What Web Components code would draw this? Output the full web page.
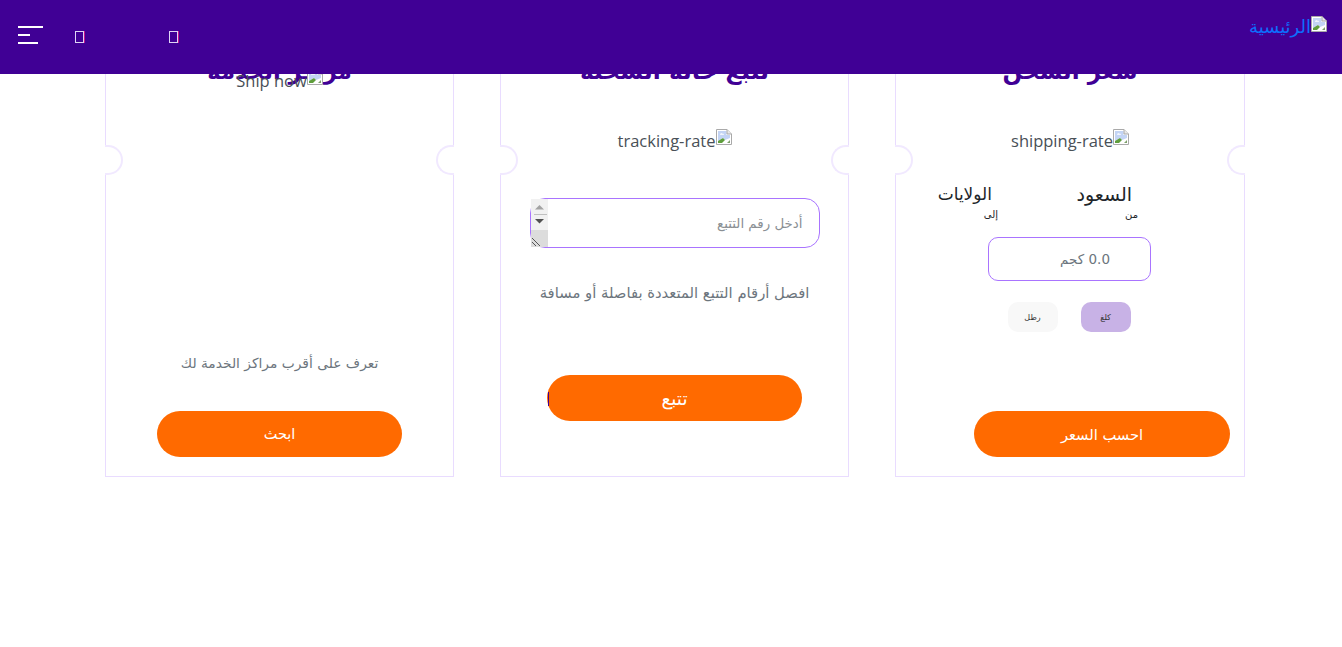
<!DOCTYPE html>
<html lang="ar" dir="rtl">
<head>
<meta charset="utf-8">
<title>الرئيسية</title>
<style>
  html, body { margin: 0; padding: 0; background: #fff; }
  body { font-family: "Noto Sans", "DejaVu Sans", sans-serif; color: #212529; min-height: 647px; }
  main { display: grid; grid-template-columns: 350px 349px 349px; column-gap: 46px; justify-content: start; padding: 20px 97px 0 0; height: 457px; }

  /* spacing of the card contents */
  .rate broken-pic, .track broken-pic { margin-top: 38px; }
  .rate route-row { margin-top: 29px; }
  .rate weight-input { margin: 13px 93px 0 auto; }
  .rate unit-toggle { margin-top: 21px; padding-right: 2px; }
  .rate pill-button { width: 256px; margin: auto 14px 0 0; align-self: flex-start; font-size: 14.7px; }
  .track code-box { margin-top: 45px; }
  .track hint-text { margin-top: 33px; font-size: 14.8px; }
  .track pill-button { width: 255px; margin: auto 0 36px 0; font-size: 18.5px; }
  .centers broken-pic { margin-top: -22px; }
  .centers hint-text { margin-top: auto; font-size: 13.8px; }
  .centers pill-button { width: 245px; margin: 36px 0 0 0; font-size: 14.5px; }
  .rate { --title-size: 23px; }
  .track { --title-size: 23.3px; }
  .centers { --title-size: 22.7px; }
</style>
</head>
<body>
<top-bar></top-bar>
<main>
  <rate-card class="rate" heading="سعر الشحن">
    <broken-pic>shipping-rate</broken-pic>
    <route-row from="السعود" to="الولايات"></route-row>
    <weight-input></weight-input>
    <unit-toggle></unit-toggle>
    <pill-button>احسب السعر</pill-button>
  </rate-card>
  <rate-card class="track" heading="تتبع حالة الشحنة">
    <broken-pic>tracking-rate</broken-pic>
    <code-box></code-box>
    <hint-text>افصل أرقام التتبع المتعددة بفاصلة أو مسافة</hint-text>
    <pill-button sliver>تتبع</pill-button>
  </rate-card>
  <rate-card class="centers" heading="مراكز الخدمة">
    <broken-pic>Ship now</broken-pic>
    <hint-text>تعرف على أقرب مراكز الخدمة لك</hint-text>
    <pill-button>ابحث</pill-button>
  </rate-card>
</main>

<script>
const AR_FONT = '"DejaVu Sans ExtraLight", "DejaVu Sans", sans-serif';
const BROKEN_ICON = `
  <svg width="16" height="16" viewBox="0 0 16 16" aria-hidden="true">
    <path d="M.5.5H11L15.5 5v10.5H.5z" fill="#fff" stroke="#a9a9a9"/>
    <path d="M2 2h8.5v4H14v3L9 11 7 9 2 12z" fill="#c3d4f5"/>
    <path d="M4 5.5c.5-1.5 2-1.5 2.5-.7.8-.3 1.6.2 1.5.9H4z" fill="#fff"/>
    <path d="M2 14v-2l5-3 2 2-3 3z" fill="#5f9e3c"/>
    <path d="M11 14l3-3v3z" fill="#7d9f6a"/>
    <path d="M11 .5V5h4.5" fill="#e9e9e9" stroke="#a9a9a9"/>
  </svg>`;

// helper so every element below stays a few lines
function shadow(el, html) {
  el.attachShadow({ mode: "open" }).innerHTML = html;
}

customElements.define("broken-pic", class extends HTMLElement {
  constructor() {
    super();
    shadow(this, `
    <style>
      :host { display: flex; justify-content: center; align-items: flex-start; height: 24px; font: 16.5px/24px "Open Sans", sans-serif; color: #495057; }
      svg { flex: none; }
    </style>
    ${BROKEN_ICON}<slot></slot>`);
  }
});

customElements.define("top-bar", class extends HTMLElement {
  constructor() {
    super();
    shadow(this, `
    <style>
      :host { display: flex; position: fixed; top: 0; left: 0; right: 0; height: 74px; z-index: 5; background: #400095; justify-content: space-between; direction: rtl; }
      .home { display: flex; align-items: flex-start; padding: 16px 15px 0 0; color: #0d6efd; font: 18px/22px ${AR_FONT}; }
      .tools { display: flex; direction: ltr; align-items: flex-start; padding: 26px 0 0 18px; }
      .burger { display: flex; flex-direction: column; gap: 6px; width: 25px; margin-right: 32px; }
      .burger i { display: block; height: 2px; background: #fff; }
      .tofu { width: 7px; height: 10px; margin-top: 5px; border: 1px solid #ded5f5; box-shadow: 1px 0 0 #c4128c; }
      .tofu + .tofu { margin-left: 85px; }
    </style>
    <a class="home">${BROKEN_ICON}<span>الرئيسية</span></a>
    <div class="tools">
      <div class="burger"><i></i><i style="width:12px"></i><i style="width:20px"></i></div>
      <div class="tofu"></div>
      <div class="tofu"></div>
    </div>`);
  }
});

customElements.define("rate-card", class extends HTMLElement {
  constructor() {
    super();
    shadow(this, `
    <style>
      :host { display: flex; flex-direction: column; position: relative; box-sizing: border-box; padding: 30px 0 19px; border: 1px solid #e9dcff; background: #fff; }
      h2 { margin: 0; height: 40px; font: 700 var(--title-size, 24px)/40px ${AR_FONT}; color: #400095; text-align: center; white-space: nowrap; }
      .body { flex: 1; display: flex; flex-direction: column; }
      .notch { position: absolute; top: 124px; width: 18px; height: 30px; box-sizing: border-box; background: #fff; border: 2px solid #f1e9ff; }
      .l { left: -1px; border-left: 0; border-radius: 0 15px 15px 0; }
      .r { right: -1px; border-right: 0; border-radius: 15px 0 0 15px; }
    </style>
    <h2></h2>
    <div class="body"><slot></slot></div>
    <div class="notch l"></div><div class="notch r"></div>`);
    this.shadowRoot.querySelector("h2").textContent = this.getAttribute("heading");
  }
});

customElements.define("route-row", class extends HTMLElement {
  constructor() {
    super();
    shadow(this, `
    <style>
      :host { display: flex; padding-right: 106px; color: #212529; }
      div { flex: none; width: 140px; }
      b { display: block; padding-right: 6px; font: 400 17px/24px ${AR_FONT}; white-space: nowrap; }
      #a { font-size: 19px; }
      small { display: block; font: 10px/18px ${AR_FONT}; }
    </style>
    <div><b id="a"></b><small>من</small></div>
    <div><b id="b"></b><small>إلى</small></div>`);
    this.shadowRoot.getElementById("a").textContent = this.getAttribute("from");
    this.shadowRoot.getElementById("b").textContent = this.getAttribute("to");
  }
});

customElements.define("weight-input", class extends HTMLElement {
  constructor() {
    super();
    shadow(this, `
    <style>
      :host { display: block; width: 163px; margin-inline: auto; }
      input { display: block; width: 100%; height: 44px; box-sizing: border-box; padding: 0 40px 0 10px; border: 1px solid #a974ff; border-radius: 10px; background: #fff; outline: 0; direction: rtl; font: 13.5px ${AR_FONT}; }
      input::placeholder { color: #6c757d; }
    </style>
    <input type="text" placeholder="0.0 كجم">`);
  }
});

customElements.define("unit-toggle", class extends HTMLElement {
  constructor() {
    super();
    shadow(this, `
    <style>
      :host { display: flex; justify-content: center; gap: 23px; }
      span { display: flex; align-items: center; justify-content: center; width: 50px; height: 30px; border-radius: 10px; background: #f8f8f8; font: 8px ${AR_FONT}; color: #333; }
      .on { background: #c8b2e6; }
    </style>
    <span class="on">كلغ</span><span>رطل</span>`);
  }
});

customElements.define("code-box", class extends HTMLElement {
  constructor() {
    super();
    shadow(this, `
    <style>
      :host { display: block; position: relative; width: 290px; margin-inline: auto; }
      textarea { display: block; width: 100%; height: 50px; box-sizing: border-box; padding: 13px 16px 9px; border: 1px solid #a974ff; border-radius: 15px; outline: 0; overflow: hidden; resize: none; direction: rtl; font: 13.4px/24px ${AR_FONT}; background: #fff; }
      textarea::placeholder { color: #8a8f94; }
      /* the old scrollbar and resize grip that sit over the box */
      svg { position: absolute; left: 1px; top: 1px; }
    </style>
    <textarea placeholder="أدخل رقم التتبع"></textarea>
    <svg width="17" height="48" viewBox="0 0 17 48" aria-hidden="true">
      <rect width="17" height="48" fill="#f1f1f1"/>
      <rect y="31" width="17" height="17" fill="#dcdcdc"/>
      <path d="M8.5 6l4.5 4.5H4z" fill="#a3a3a3"/>
      <path d="M3 15.5h13" stroke="#c0c0c0"/>
      <path d="M4 20h9l-4.5 4.5z" fill="#505050"/>
      <path d="M1 39l8 8M1 43l4 4" stroke="#555" fill="none"/>
    </svg>`);
  }
});

customElements.define("hint-text", class extends HTMLElement {
  constructor() {
    super();
    shadow(this, `
    <style>
      :host { display: block; text-align: center; font: 14px/24px ${AR_FONT}; color: #6c757d; white-space: nowrap; }
    </style>
    <slot></slot>`);
  }
});

customElements.define("pill-button", class extends HTMLElement {
  constructor() {
    super();
    shadow(this, `
    <style>
      :host { display: flex; align-self: center; position: relative; align-items: center; justify-content: center; box-sizing: border-box; height: 46px; border-radius: 23px; background: #ff6a00; color: #fff; font: 16px ${AR_FONT}; cursor: pointer; }
      :host([sliver])::before { content: ""; position: absolute; left: 1px; top: 17px; width: 1px; height: 14px; background: #400095; }
    </style>
    <slot></slot>`);
  }
});
</script>
</body>
</html>
